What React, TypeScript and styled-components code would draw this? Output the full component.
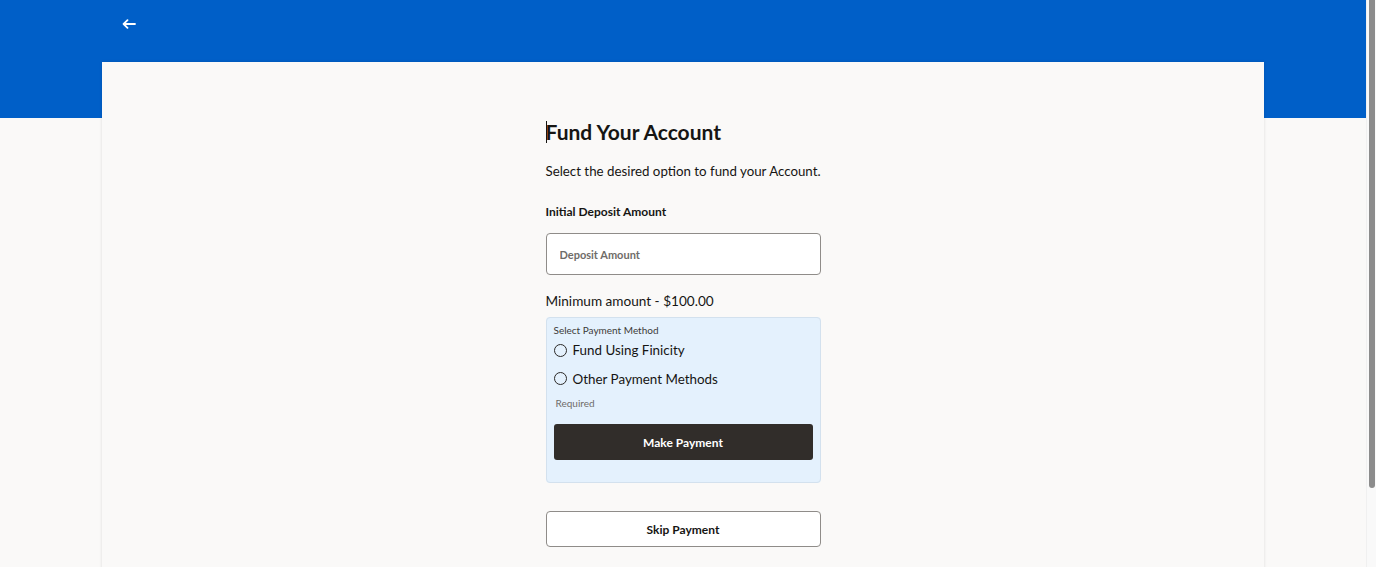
import React from "react";
import styled, { createGlobalStyle } from "styled-components";

const Global = createGlobalStyle`
  html, body { margin: 0; padding: 0; }
  body {
    background: #faf9f8;
    font-family: Lato, "Noto Sans", sans-serif;
    color: #161513;
    overflow: hidden;
  }
`;

const Page = styled.div`
  width: 1366px;
  min-height: 567px;
`;

const Header = styled.header`
  height: 118px;
  background: #005fc8;
  padding: 16px 0 0 121px;
  box-sizing: border-box;
`;

const BackButton = styled.button`
  border: 0;
  background: transparent;
  padding: 0;
  width: 16px;
  height: 16px;
  display: flex;
  align-items: center;
  justify-content: center;
  cursor: pointer;
`;

const Card = styled.main`
  margin: -56px auto 0;
  width: 1162px;
  min-height: 600px;
  background: #faf9f8;
  box-shadow: 0 0 3px rgba(0, 0, 0, 0.12);
  display: flex;
  justify-content: center;
  padding-top: 56px;
  box-sizing: border-box;
`;

const Column = styled.section`
  width: 275px;
  display: flex;
  flex-direction: column;
`;

const Title = styled.h1`
  position: relative;
  margin: 0;
  font-size: 21px;
  font-weight: 700;
  line-height: 28px;
  color: #161513;
  &::before {
    content: "";
    position: absolute;
    left: 0;
    top: 3px;
    width: 1px;
    height: 22px;
    background: #161513;
  }
`;

const Subtitle = styled.p`
  margin: 15px 0 0;
  font-size: 13.3px;
  line-height: 20px;
  white-space: nowrap;
  color: #161513;
`;

const Label = styled.label`
  margin-top: 23px;
  font-size: 12px;
  font-weight: 700;
  line-height: 16px;
`;

const Input = styled.input`
  margin-top: 13px;
  height: 42px;
  box-sizing: border-box;
  border: 1px solid #8f8c89;
  border-radius: 4px;
  background: #fff;
  padding: 0 13px;
  font-family: inherit;
  font-size: 11px;
  font-weight: 700;
  color: #161513;
  &::placeholder { color: #6f6c69; }
  outline: none;
`;

const MinText = styled.p`
  margin: 16px 0 0;
  font-size: 13.6px;
  line-height: 20px;
`;

const PaymentBox = styled.fieldset`
  margin: 6px 0 0;
  border: 1px solid #d3e1ee;
  border-radius: 4px;
  background: #e4f1fd;
  padding: 5px 7px 22px;
  display: flex;
  flex-direction: column;
  min-width: 0;
`;

const Legend = styled.div`
  font-size: 10px;
  line-height: 14px;
  color: #3c3a38;
`;

const RadioRow = styled.label<{ $first?: boolean }>`
  display: flex;
  align-items: center;
  gap: 6px;
  height: ${(p) => (p.$first ? 23 : 29)}px;
  padding-top: ${(p) => (p.$first ? 3 : 8)}px;
  box-sizing: border-box;
  font-size: 13.4px;
  color: #161513;
  cursor: pointer;
`;

const RadioCircle = styled.span`
  width: 13px;
  height: 13px;
  box-sizing: border-box;
  border: 1.5px solid #2b2927;
  border-radius: 50%;
  background: transparent;
  flex: none;
`;

const Helper = styled.div`
  margin-top: 7px;
  padding-left: 2px;
  font-size: 10px;
  line-height: 14px;
  color: #6f6c69;
`;

const PrimaryButton = styled.button`
  margin-top: 14px;
  height: 36px;
  border: 0;
  border-radius: 3px;
  background: #312d2a;
  color: #fff;
  font-family: inherit;
  font-size: 12px;
  font-weight: 700;
  cursor: pointer;
`;

const SecondaryButton = styled.button`
  margin-top: 28px;
  height: 36px;
  border: 1px solid #8f8c89;
  border-radius: 4px;
  background: #fff;
  color: #161513;
  font-family: inherit;
  font-size: 12px;
  font-weight: 700;
  cursor: pointer;
`;

const ScrollTrack = styled.div`
  position: fixed;
  top: 0;
  right: 0;
  width: 10px;
  height: 100vh;
  background: #f9f9f9;
  border-left: 1px solid #f0f0f0;
  box-sizing: border-box;
`;

const ScrollThumb = styled.div`
  margin: 0 0 0 2px;
  width: 6px;
  height: 488px;
  border-radius: 0 0 3px 3px;
  background: #8c8c8c;
`;

export default function App() {
  return (
    <Page>
      <Global />
      <Header>
        <BackButton aria-label="Back">
          <svg width="14" height="10" viewBox="0 0 14 10" fill="none">
            <path d="M13 5H2M5.5 1.2L1.6 5l3.9 3.8" stroke="#fff" strokeWidth="1.8" strokeLinecap="round" strokeLinejoin="round" />
          </svg>
        </BackButton>
      </Header>
      <Card>
        <Column>
          <Title>Fund Your Account</Title>
          <Subtitle>Select the desired option to fund your Account.</Subtitle>
          <Label htmlFor="dep">Initial Deposit Amount</Label>
          <Input id="dep" placeholder="Deposit Amount" />
          <MinText>Minimum amount - $100.00</MinText>
          <PaymentBox>
            <Legend>Select Payment Method</Legend>
            <RadioRow $first><RadioCircle />Fund Using Finicity</RadioRow>
            <RadioRow><RadioCircle />Other Payment Methods</RadioRow>
            <Helper>Required</Helper>
            <PrimaryButton>Make Payment</PrimaryButton>
          </PaymentBox>
          <SecondaryButton>Skip Payment</SecondaryButton>
        </Column>
      </Card>
      <ScrollTrack>
        <ScrollThumb />
      </ScrollTrack>
    </Page>
  );
}
